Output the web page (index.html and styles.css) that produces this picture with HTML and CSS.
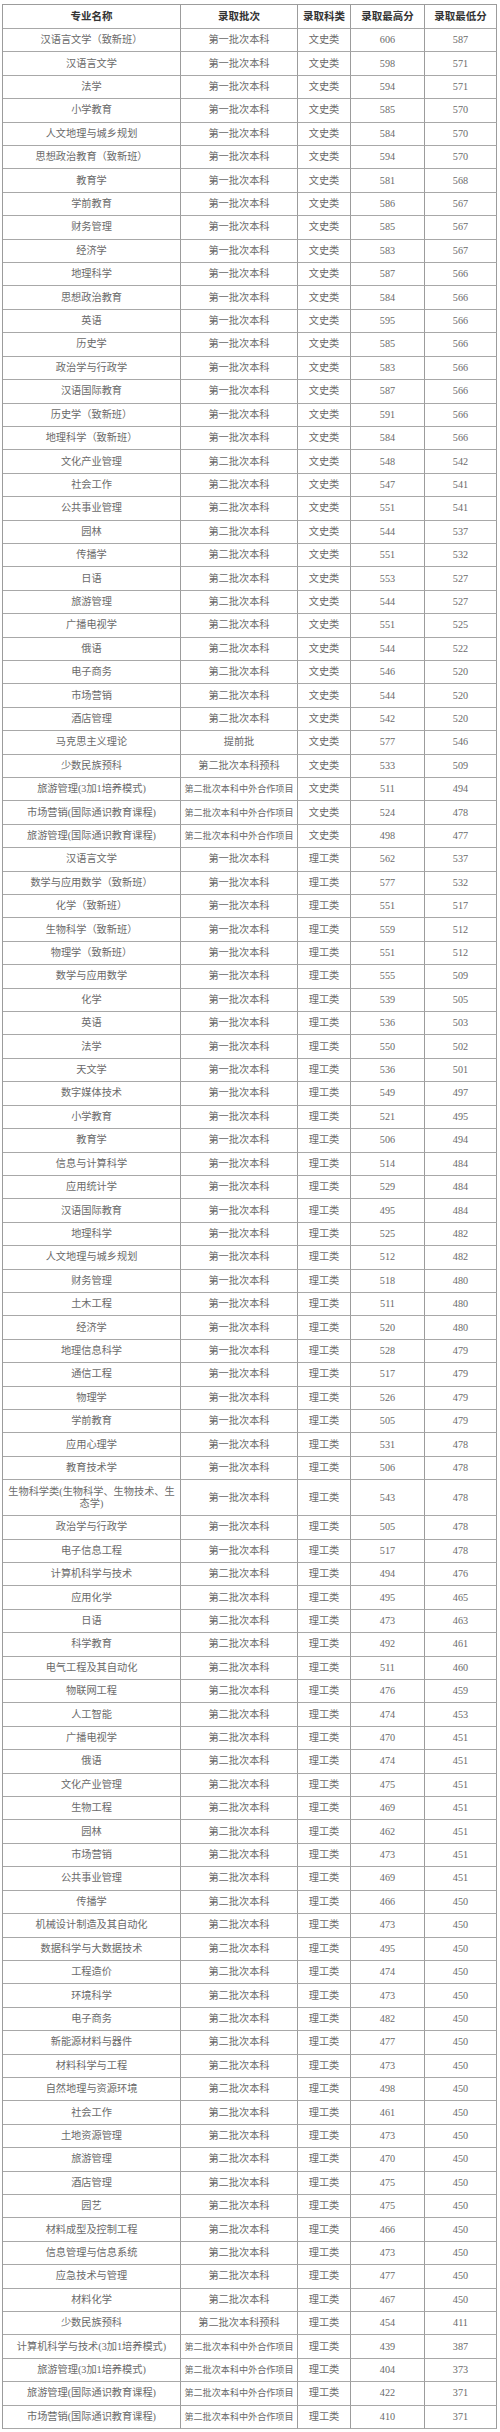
FILE: index.html
```html
<!DOCTYPE html>
<html lang="zh-CN">
<head>
<meta charset="utf-8">
<title>录取分数</title>
<link rel="stylesheet" href="styles.css">
</head>
<body>
<table class="scores">
<thead>
<tr><th class="c1">专业名称</th><th class="c2">录取批次</th><th class="c3">录取科类</th><th class="c4">录取最高分</th><th class="c5">录取最低分</th></tr>
</thead>
<tbody>
<tr><td>汉语言文学（致新班）</td><td>第一批次本科</td><td>文史类</td><td>606</td><td>587</td></tr>
<tr><td>汉语言文学</td><td>第一批次本科</td><td>文史类</td><td>598</td><td>571</td></tr>
<tr><td>法学</td><td>第一批次本科</td><td>文史类</td><td>594</td><td>571</td></tr>
<tr><td>小学教育</td><td>第一批次本科</td><td>文史类</td><td>585</td><td>570</td></tr>
<tr><td>人文地理与城乡规划</td><td>第一批次本科</td><td>文史类</td><td>584</td><td>570</td></tr>
<tr><td>思想政治教育（致新班）</td><td>第一批次本科</td><td>文史类</td><td>594</td><td>570</td></tr>
<tr><td>教育学</td><td>第一批次本科</td><td>文史类</td><td>581</td><td>568</td></tr>
<tr><td>学前教育</td><td>第一批次本科</td><td>文史类</td><td>586</td><td>567</td></tr>
<tr><td>财务管理</td><td>第一批次本科</td><td>文史类</td><td>585</td><td>567</td></tr>
<tr><td>经济学</td><td>第一批次本科</td><td>文史类</td><td>583</td><td>567</td></tr>
<tr><td>地理科学</td><td>第一批次本科</td><td>文史类</td><td>587</td><td>566</td></tr>
<tr><td>思想政治教育</td><td>第一批次本科</td><td>文史类</td><td>584</td><td>566</td></tr>
<tr><td>英语</td><td>第一批次本科</td><td>文史类</td><td>595</td><td>566</td></tr>
<tr><td>历史学</td><td>第一批次本科</td><td>文史类</td><td>585</td><td>566</td></tr>
<tr><td>政治学与行政学</td><td>第一批次本科</td><td>文史类</td><td>583</td><td>566</td></tr>
<tr><td>汉语国际教育</td><td>第一批次本科</td><td>文史类</td><td>587</td><td>566</td></tr>
<tr><td>历史学（致新班）</td><td>第一批次本科</td><td>文史类</td><td>591</td><td>566</td></tr>
<tr><td>地理科学（致新班）</td><td>第一批次本科</td><td>文史类</td><td>584</td><td>566</td></tr>
<tr><td>文化产业管理</td><td>第二批次本科</td><td>文史类</td><td>548</td><td>542</td></tr>
<tr><td>社会工作</td><td>第二批次本科</td><td>文史类</td><td>547</td><td>541</td></tr>
<tr><td>公共事业管理</td><td>第二批次本科</td><td>文史类</td><td>551</td><td>541</td></tr>
<tr><td>园林</td><td>第二批次本科</td><td>文史类</td><td>544</td><td>537</td></tr>
<tr><td>传播学</td><td>第二批次本科</td><td>文史类</td><td>551</td><td>532</td></tr>
<tr><td>日语</td><td>第二批次本科</td><td>文史类</td><td>553</td><td>527</td></tr>
<tr><td>旅游管理</td><td>第二批次本科</td><td>文史类</td><td>544</td><td>527</td></tr>
<tr><td>广播电视学</td><td>第二批次本科</td><td>文史类</td><td>551</td><td>525</td></tr>
<tr><td>俄语</td><td>第二批次本科</td><td>文史类</td><td>544</td><td>522</td></tr>
<tr><td>电子商务</td><td>第二批次本科</td><td>文史类</td><td>546</td><td>520</td></tr>
<tr><td>市场营销</td><td>第二批次本科</td><td>文史类</td><td>544</td><td>520</td></tr>
<tr><td>酒店管理</td><td>第二批次本科</td><td>文史类</td><td>542</td><td>520</td></tr>
<tr><td>马克思主义理论</td><td>提前批</td><td>文史类</td><td>577</td><td>546</td></tr>
<tr><td>少数民族预科</td><td>第二批次本科预科</td><td>文史类</td><td>533</td><td>509</td></tr>
<tr><td>旅游管理(3加1培养模式)</td><td class="small">第二批次本科中外合作项目</td><td>文史类</td><td>511</td><td>494</td></tr>
<tr><td>市场营销(国际通识教育课程)</td><td class="small">第二批次本科中外合作项目</td><td>文史类</td><td>524</td><td>478</td></tr>
<tr><td>旅游管理(国际通识教育课程)</td><td class="small">第二批次本科中外合作项目</td><td>文史类</td><td>498</td><td>477</td></tr>
<tr><td>汉语言文学</td><td>第一批次本科</td><td>理工类</td><td>562</td><td>537</td></tr>
<tr><td>数学与应用数学（致新班）</td><td>第一批次本科</td><td>理工类</td><td>577</td><td>532</td></tr>
<tr><td>化学（致新班）</td><td>第一批次本科</td><td>理工类</td><td>551</td><td>517</td></tr>
<tr><td>生物科学（致新班）</td><td>第一批次本科</td><td>理工类</td><td>559</td><td>512</td></tr>
<tr><td>物理学（致新班）</td><td>第一批次本科</td><td>理工类</td><td>551</td><td>512</td></tr>
<tr><td>数学与应用数学</td><td>第一批次本科</td><td>理工类</td><td>555</td><td>509</td></tr>
<tr><td>化学</td><td>第一批次本科</td><td>理工类</td><td>539</td><td>505</td></tr>
<tr><td>英语</td><td>第一批次本科</td><td>理工类</td><td>536</td><td>503</td></tr>
<tr><td>法学</td><td>第一批次本科</td><td>理工类</td><td>550</td><td>502</td></tr>
<tr><td>天文学</td><td>第一批次本科</td><td>理工类</td><td>536</td><td>501</td></tr>
<tr><td>数字媒体技术</td><td>第一批次本科</td><td>理工类</td><td>549</td><td>497</td></tr>
<tr><td>小学教育</td><td>第一批次本科</td><td>理工类</td><td>521</td><td>495</td></tr>
<tr><td>教育学</td><td>第一批次本科</td><td>理工类</td><td>506</td><td>494</td></tr>
<tr><td>信息与计算科学</td><td>第一批次本科</td><td>理工类</td><td>514</td><td>484</td></tr>
<tr><td>应用统计学</td><td>第一批次本科</td><td>理工类</td><td>529</td><td>484</td></tr>
<tr><td>汉语国际教育</td><td>第一批次本科</td><td>理工类</td><td>495</td><td>484</td></tr>
<tr><td>地理科学</td><td>第一批次本科</td><td>理工类</td><td>525</td><td>482</td></tr>
<tr><td>人文地理与城乡规划</td><td>第一批次本科</td><td>理工类</td><td>512</td><td>482</td></tr>
<tr><td>财务管理</td><td>第一批次本科</td><td>理工类</td><td>518</td><td>480</td></tr>
<tr><td>土木工程</td><td>第一批次本科</td><td>理工类</td><td>511</td><td>480</td></tr>
<tr><td>经济学</td><td>第一批次本科</td><td>理工类</td><td>520</td><td>480</td></tr>
<tr><td>地理信息科学</td><td>第一批次本科</td><td>理工类</td><td>528</td><td>479</td></tr>
<tr><td>通信工程</td><td>第一批次本科</td><td>理工类</td><td>517</td><td>479</td></tr>
<tr><td>物理学</td><td>第一批次本科</td><td>理工类</td><td>526</td><td>479</td></tr>
<tr><td>学前教育</td><td>第一批次本科</td><td>理工类</td><td>505</td><td>479</td></tr>
<tr><td>应用心理学</td><td>第一批次本科</td><td>理工类</td><td>531</td><td>478</td></tr>
<tr><td>教育技术学</td><td>第一批次本科</td><td>理工类</td><td>506</td><td>478</td></tr>
<tr class="tall"><td>生物科学类(生物科学、生物技术、生<br>态学)</td><td>第一批次本科</td><td>理工类</td><td>543</td><td>478</td></tr>
<tr><td>政治学与行政学</td><td>第一批次本科</td><td>理工类</td><td>505</td><td>478</td></tr>
<tr><td>电子信息工程</td><td>第一批次本科</td><td>理工类</td><td>517</td><td>478</td></tr>
<tr><td>计算机科学与技术</td><td>第二批次本科</td><td>理工类</td><td>494</td><td>476</td></tr>
<tr><td>应用化学</td><td>第二批次本科</td><td>理工类</td><td>495</td><td>465</td></tr>
<tr><td>日语</td><td>第二批次本科</td><td>理工类</td><td>473</td><td>463</td></tr>
<tr><td>科学教育</td><td>第二批次本科</td><td>理工类</td><td>492</td><td>461</td></tr>
<tr><td>电气工程及其自动化</td><td>第二批次本科</td><td>理工类</td><td>511</td><td>460</td></tr>
<tr><td>物联网工程</td><td>第二批次本科</td><td>理工类</td><td>476</td><td>459</td></tr>
<tr><td>人工智能</td><td>第二批次本科</td><td>理工类</td><td>474</td><td>453</td></tr>
<tr><td>广播电视学</td><td>第二批次本科</td><td>理工类</td><td>470</td><td>451</td></tr>
<tr><td>俄语</td><td>第二批次本科</td><td>理工类</td><td>474</td><td>451</td></tr>
<tr><td>文化产业管理</td><td>第二批次本科</td><td>理工类</td><td>475</td><td>451</td></tr>
<tr><td>生物工程</td><td>第二批次本科</td><td>理工类</td><td>469</td><td>451</td></tr>
<tr><td>园林</td><td>第二批次本科</td><td>理工类</td><td>462</td><td>451</td></tr>
<tr><td>市场营销</td><td>第二批次本科</td><td>理工类</td><td>473</td><td>451</td></tr>
<tr><td>公共事业管理</td><td>第二批次本科</td><td>理工类</td><td>469</td><td>451</td></tr>
<tr><td>传播学</td><td>第二批次本科</td><td>理工类</td><td>466</td><td>450</td></tr>
<tr><td>机械设计制造及其自动化</td><td>第二批次本科</td><td>理工类</td><td>473</td><td>450</td></tr>
<tr><td>数据科学与大数据技术</td><td>第二批次本科</td><td>理工类</td><td>495</td><td>450</td></tr>
<tr><td>工程造价</td><td>第二批次本科</td><td>理工类</td><td>474</td><td>450</td></tr>
<tr><td>环境科学</td><td>第二批次本科</td><td>理工类</td><td>473</td><td>450</td></tr>
<tr><td>电子商务</td><td>第二批次本科</td><td>理工类</td><td>482</td><td>450</td></tr>
<tr><td>新能源材料与器件</td><td>第二批次本科</td><td>理工类</td><td>477</td><td>450</td></tr>
<tr><td>材料科学与工程</td><td>第二批次本科</td><td>理工类</td><td>473</td><td>450</td></tr>
<tr><td>自然地理与资源环境</td><td>第二批次本科</td><td>理工类</td><td>498</td><td>450</td></tr>
<tr><td>社会工作</td><td>第二批次本科</td><td>理工类</td><td>461</td><td>450</td></tr>
<tr><td>土地资源管理</td><td>第二批次本科</td><td>理工类</td><td>473</td><td>450</td></tr>
<tr><td>旅游管理</td><td>第二批次本科</td><td>理工类</td><td>470</td><td>450</td></tr>
<tr><td>酒店管理</td><td>第二批次本科</td><td>理工类</td><td>475</td><td>450</td></tr>
<tr><td>园艺</td><td>第二批次本科</td><td>理工类</td><td>475</td><td>450</td></tr>
<tr><td>材料成型及控制工程</td><td>第二批次本科</td><td>理工类</td><td>466</td><td>450</td></tr>
<tr><td>信息管理与信息系统</td><td>第二批次本科</td><td>理工类</td><td>473</td><td>450</td></tr>
<tr><td>应急技术与管理</td><td>第二批次本科</td><td>理工类</td><td>477</td><td>450</td></tr>
<tr><td>材料化学</td><td>第二批次本科</td><td>理工类</td><td>467</td><td>450</td></tr>
<tr><td>少数民族预科</td><td>第二批次本科预科</td><td>理工类</td><td>454</td><td>411</td></tr>
<tr><td>计算机科学与技术(3加1培养模式)</td><td class="small">第二批次本科中外合作项目</td><td>理工类</td><td>439</td><td>387</td></tr>
<tr><td>旅游管理(3加1培养模式)</td><td class="small">第二批次本科中外合作项目</td><td>理工类</td><td>404</td><td>373</td></tr>
<tr><td>旅游管理(国际通识教育课程)</td><td class="small">第二批次本科中外合作项目</td><td>理工类</td><td>422</td><td>371</td></tr>
<tr><td>市场营销(国际通识教育课程)</td><td class="small">第二批次本科中外合作项目</td><td>理工类</td><td>410</td><td>371</td></tr>
</tbody>
</table>
</body>
</html>
```

FILE: styles.css
```css
html, body {
  margin: 0;
  padding: 0;
  background: #ffffff;
}

.scores {
  margin: 4px 0 0 2px;
  width: 495px;
  box-sizing: border-box;
  table-layout: fixed;
  border-collapse: separate;
  border-spacing: 0;
  border-left: 1px solid #9c9c9c;
  border-top: 1px solid #9c9c9c;
  font-family: "Liberation Serif", "Noto Sans CJK SC", serif;
}

.scores th,
.scores td {
  box-sizing: border-box;
  padding: 0;
  border-right: 1px solid #9c9c9c;
  border-bottom: 1px solid #a8a8a8;
  text-align: center;
  vertical-align: middle;
  white-space: nowrap;
  overflow: hidden;
}

.scores thead tr {
  height: 24px;
}

.scores th {
  font-size: 10.5px;
  font-weight: bold;
  color: #333333;
  line-height: 12px;
}

.scores .c1 { width: 178px; }
.scores .c2 { width: 117px; }
.scores .c3 { width: 53px; }
.scores .c4 { width: 74px; }
.scores .c5 { width: 72px; }

.scores tbody tr {
  height: 23.41px;
}

.scores tbody tr.tall {
  height: 36px;
}

.scores td {
  font-size: 10.2px;
  line-height: 12px;
  color: #6a6a6a;
}

.scores td.small {
  font-size: 9.1px;
}
```
